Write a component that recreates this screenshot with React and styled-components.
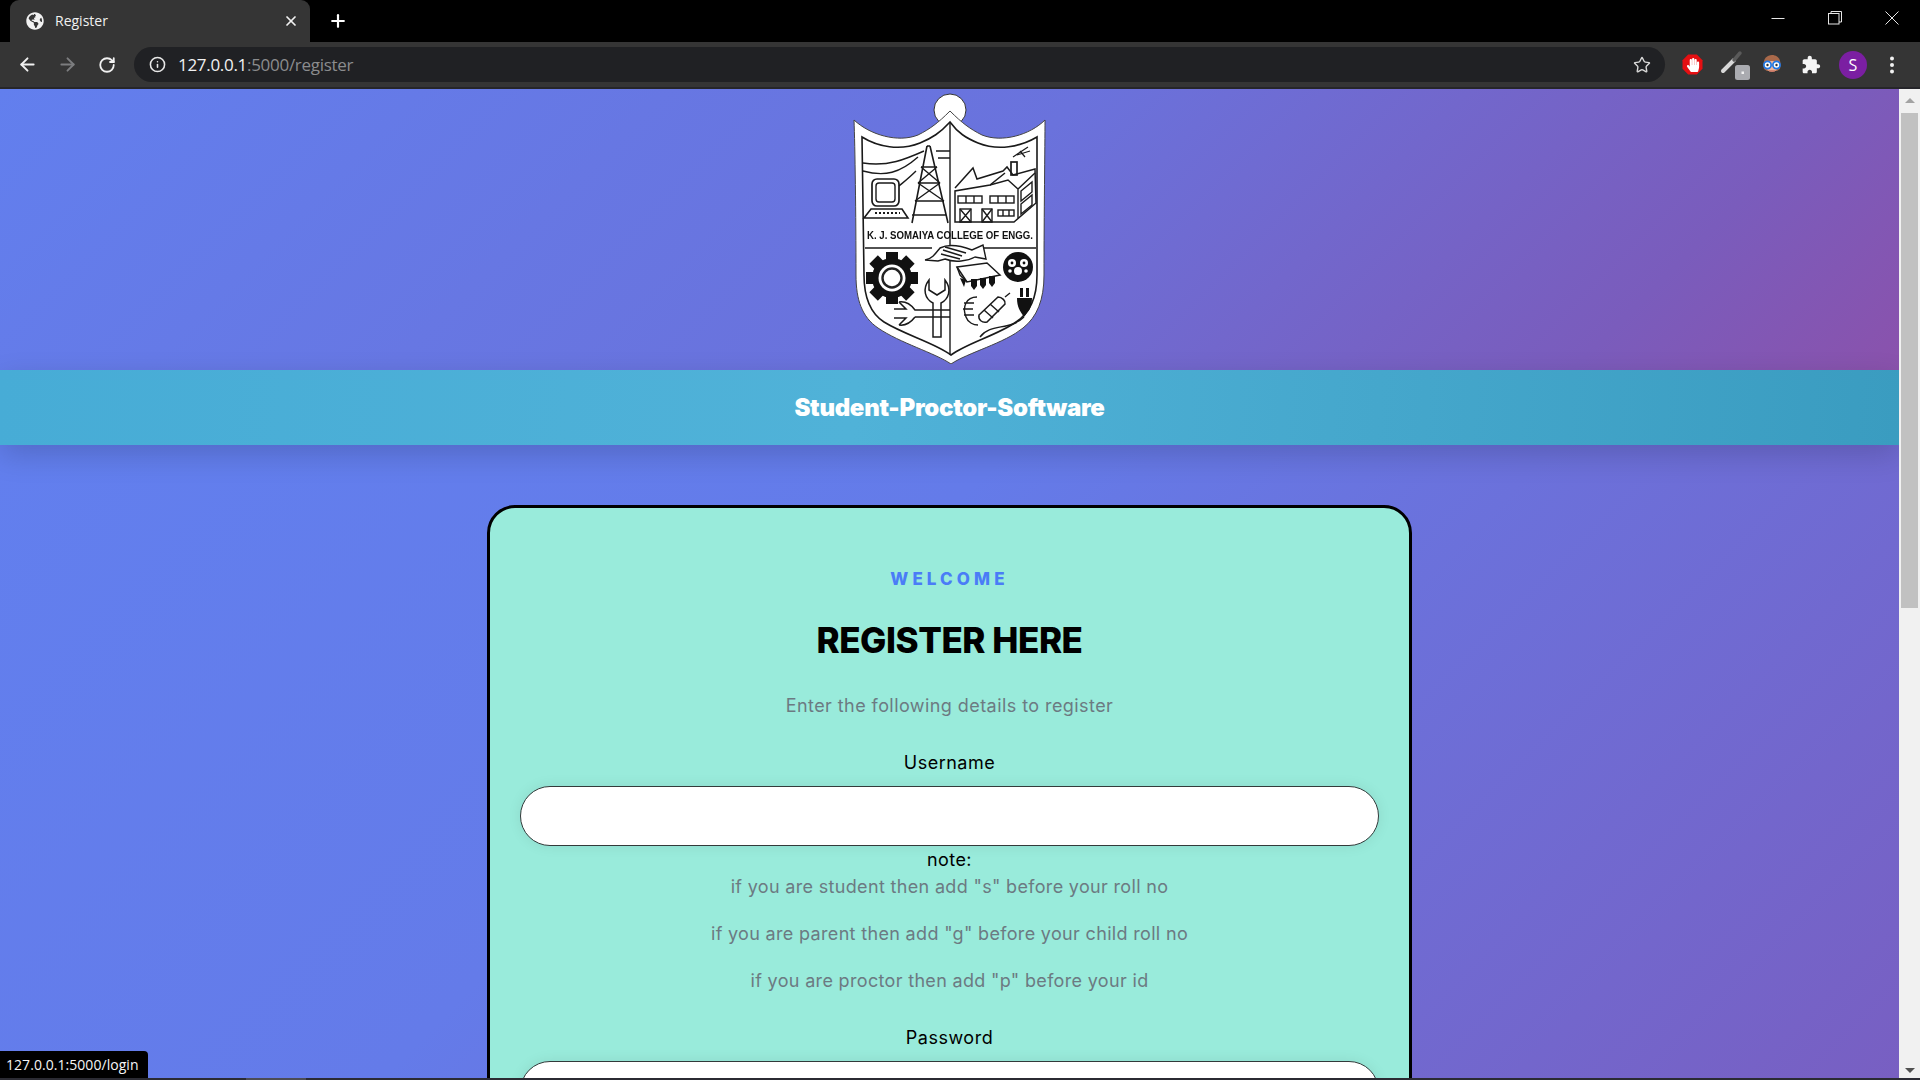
import React from "react";
import styled, { createGlobalStyle } from "styled-components";
import { ArrowLeft, ArrowRight, RotateCw, Info, Star, X, Plus } from "lucide-react";
import { FaGlobeAmericas, FaHandPaper } from "react-icons/fa";

const Global = createGlobalStyle`
  html, body { margin: 0; padding: 0; height: 100%; overflow: hidden; background: #000; }
  * { box-sizing: border-box; }
`;

const Shell = styled.div`
  position: relative;
  width: 1920px;
  height: 1080px;
  display: flex;
  flex-direction: column;
  overflow: hidden;
  font-family: "Inter", "Liberation Sans", sans-serif;
`;

const TabStrip = styled.div`
  height: 42px;
  background: #000;
  display: flex;
  align-items: flex-end;
  padding-left: 10px;
  color: #fff;
  flex: none;
`;

const Tab = styled.div`
  width: 300px;
  height: 42px;
  background: #353535;
  border-radius: 9px 9px 0 0;
  display: flex;
  align-items: center;
  padding: 0 11px 1px 16px;
  font: 400 14px "Open Sans", "Liberation Sans", sans-serif;
  color: #f1f1f1;
`;

const TabTitle = styled.span`
  margin-left: 11px;
  flex: 1;
`;

const NewTab = styled.div`
  width: 50px;
  height: 42px;
  margin-left: 3px;
  display: flex;
  align-items: center;
  justify-content: center;
`;

const WindowControls = styled.div`
  margin-left: auto;
  height: 42px;
  display: flex;
  align-items: flex-start;
`;

const WindowButton = styled.div`
  width: 57px;
  height: 36px;
  display: flex;
  align-items: center;
  justify-content: center;
`;

const Toolbar = styled.div`
  height: 47px;
  flex: none;
  background: #353535;
  border-bottom: 2px solid #26262a;
  display: flex;
  align-items: center;
  padding: 0 4px 0 7px;
  color: #f1f1f1;
`;

const ToolSlot = styled.div`
  width: ${(p) => p.$w || 40}px;
  height: 34px;
  flex: none;
  display: flex;
  align-items: center;
  justify-content: center;
  color: ${(p) => p.$color || "#f1f1f1"};
`;

const Omnibox = styled.div`
  flex: 1;
  height: 35px;
  margin: 0 7px;
  border-radius: 18px;
  background: #202124;
  display: flex;
  align-items: center;
  padding: 0 14px 0 15px;
  font: 400 17px "Open Sans", "Liberation Sans", sans-serif;
  letter-spacing: -0.3px;
`;

const UrlHost = styled.span`
  margin-left: 12px;
  color: #f1f1f1;
`;

const UrlPath = styled.span`
  color: #8b8c8e;
  flex: 1;
`;

const Viewport = styled.div`
  flex: 1;
  min-height: 0;
  display: flex;
`;

const Page = styled.div`
  flex: 1;
  min-width: 0;
  display: flex;
  flex-direction: column;
  overflow: hidden;
`;

const Header = styled.header`
  height: 281px;
  flex: none;
  background: linear-gradient(135deg, #627fee 0%, #6a72dc 50%, #7a5cbc 85%, #8a52ac 100%);
  display: flex;
  justify-content: center;
`;

const Banner = styled.div`
  height: 75px;
  flex: none;
  position: relative;
  z-index: 1;
  background: linear-gradient(95deg, #47acd6 0%, #50b2d8 45%, #3a9cc0 100%);
  box-shadow: 0 10px 30px rgba(0, 0, 0, 0.16);
  color: #fff;
  display: flex;
  align-items: center;
  justify-content: center;
  font: 900 24px "Inter", sans-serif;
  letter-spacing: -0.3px;
`;

const Main = styled.main`
  flex: 1;
  min-height: 0;
  background: linear-gradient(135deg, #627fee 0%, #647be9 40%, #785fc2 100%);
  padding-top: 60px;
  display: flex;
  justify-content: center;
  overflow: hidden;
`;

const Card = styled.section`
  width: 925px;
  height: 900px;
  flex: none;
  border: 3px solid #000;
  border-radius: 28px;
  background: #99ebdb;
  padding: 59px 30px 0;
  text-align: center;
`;

const Eyebrow = styled.div`
  font: 800 17px/24px "Inter", sans-serif;
  letter-spacing: 4.1px;
  color: #4a7cf7;
`;

const Title = styled.h1`
  margin: 24px 0 0;
  font: 800 35px/50px "Inter", sans-serif;
  letter-spacing: -0.45px;
  color: #000;
`;

const Subtitle = styled.p`
  margin: 27px 0 0;
  font: 400 18px/28px "Inter", sans-serif;
  letter-spacing: 0.43px;
  color: #6c7a82;
`;

const FieldLabel = styled.label`
  display: block;
  margin-top: ${(p) => p.$top}px;
  font: 400 18px/24px "Inter", sans-serif;
  letter-spacing: 0.5px;
  color: #000;
`;

const TextInput = styled.input`
  display: block;
  width: 100%;
  height: 60px;
  margin-top: 11px;
  border: 1px solid #333a3a;
  border-radius: 30px;
  background: #fff;
  box-shadow: 0 0 14px rgba(0, 0, 0, 0.08);
  outline: none;
`;

const NoteTitle = styled.div`
  margin: 2px 0 1px;
  font: 400 18px/24px "Inter", sans-serif;
  letter-spacing: 0.4px;
  color: #000;
`;

const NoteLine = styled.p`
  margin: 0 0 20px;
  font: 400 18px/27px "Inter", sans-serif;
  letter-spacing: 0.33px;
  color: #6c7a82;
`;

const Scrollbar = styled.div`
  width: 21px;
  flex: none;
  background: #f1f1f1;
  display: flex;
  flex-direction: column;
  align-items: center;
  padding-top: 9px;
`;

const ThumbTrack = styled.div`
  flex: 1;
  display: flex;
  flex-direction: column;
  width: 17px;
  padding-top: 10px;
`;

const Thumb = styled.div`
  width: 17px;
  height: 495px;
  background: #c1c1c1;
`;

const Arrow = styled.div`
  width: 0;
  height: 0;
  border-left: 5px solid transparent;
  border-right: 5px solid transparent;
  ${(p) => (p.$down ? "border-top: 5px solid #505050; margin-bottom: 5px;" : "border-bottom: 5px solid #a3a3a3;")}
`;

const BottomStrip = styled.div`
  height: 2px;
  flex: none;
  background: #2b2b33;
  display: flex;
  padding-left: 246px;
`;

const StripActive = styled.div`
  width: 60px;
  background: #4c4c55;
`;

const StatusBubble = styled.div`
  position: absolute;
  left: 0;
  bottom: 2px;
  width: 148px;
  height: 27px;
  background: #000;
  border-top-right-radius: 4px;
  color: #f5f5f5;
  font: 400 14px/27px "Open Sans", "Liberation Sans", sans-serif;
  letter-spacing: 0.05px;
  padding-left: 6px;
`;

const CrestSvg = styled.svg`
  width: 220px;
  height: 275px;
  flex: none;
  filter: blur(0.45px);
`;

const CrestText = styled.text`
  font: 700 10.5px "Liberation Sans", sans-serif;
  fill: #111;
`;

const Avatar = styled.div`
  width: 28px;
  height: 28px;
  border-radius: 50%;
  background: #7b1fa2;
  color: #fff;
  font: 400 16px/28px "Open Sans", sans-serif;
  text-align: center;
`;

function Gear() {
  const teeth = [0, 45, 90, 135, 180, 225, 270, 315];
  return (
    <g>
      {teeth.map((a) => (
        <rect key={a} x="46" y="167" width="12" height="10" fill="#111" transform={`rotate(${a} 52 193)`} />
      ))}
      <circle cx="52" cy="193" r="20" fill="#111" />
      <circle cx="52" cy="193" r="13.5" fill="#fff" />
      <circle cx="52" cy="193" r="9.5" fill="#fff" stroke="#222" strokeWidth="2.4" />
    </g>
  );
}

function Crest() {
  return (
    <CrestSvg viewBox="0 4 220 275" aria-label="K. J. Somaiya College of Engg. crest">
      <circle cx="110" cy="25" r="16" fill="#fff" stroke="#333" strokeWidth="1" />
      <path
        d="M110 26C98 38 90 44 78 50C58 58 30 50 14 35C15 60 16 130 16 190C16 215 22 232 38 243C60 258 95 268 111 279C127 268 165 258 183 243C197 232 204 215 204 190C204 130 205 60 205 35C190 50 162 58 142 50C130 44 122 38 110 26Z"
        fill="#fff"
        stroke="#444"
        strokeWidth="1"
      />
      <path
        d="M110 37C100 48 92 53 80 58C60 66 38 62 22 52L24 190C24 212 30 228 44 237C65 250 95 258 111 270C127 258 158 250 176 237C190 228 197 212 197 190L197 52C180 62 158 66 138 58C126 53 118 48 110 37Z"
        fill="#fff"
        stroke="#1a1a1a"
        strokeWidth="1.6"
      />
      <g fill="none" stroke="#1a1a1a" strokeWidth="1.4">
        <path d="M110 37V270" strokeWidth="1.4" />
        <path d="M25 163H92M138 163H196" strokeWidth="1.4" />
        {/* wires and tower */}
        <path d="M23 78C48 82 66 74 84 66M23 86C45 92 60 88 78 72M96 66H110M98 73H110" />
        <path d="M87 61L72 138M90 61L108 138M87 61H90M81 82H97M78 98H100M75 116H104M72 130H106" strokeWidth="1.6" />
        <path d="M81 82L100 98M97 82L78 98M78 98L104 116M100 98L75 116" />
        {/* computer and keyboard */}
        <rect x="32" y="94" width="27" height="27" rx="5" strokeWidth="1.7" />
        <rect x="36" y="98" width="19" height="19" rx="3" />
        <path d="M59 101C65 96 70 92 76 86" />
        <path d="M24 133L31 124H62L68 133Z" strokeWidth="1.6" />
        <path d="M35 128H60" strokeDasharray="2 2" strokeWidth="2" />
        {/* building */}
        <path d="M115 103L133 83L137 94L163 86L167 82L173 90L195 84L196 118L174 137H115V106L150 100L165 88" strokeWidth="1.5" />
        <path d="M150 100L168 95L178 104L195 88M178 104V133" />
        <rect x="118" y="111" width="24" height="7" />
        <path d="M126 111V118M134 111V118" />
        <rect x="150" y="111" width="24" height="7" />
        <path d="M158 111V118M166 111V118" />
        <rect x="120" y="124" width="11" height="13" />
        <path d="M120 124L131 137M131 124L120 137" />
        <rect x="142" y="124" width="10" height="13" />
        <path d="M142 124L152 137M152 124L142 137" />
        <rect x="158" y="125" width="16" height="6" />
        <path d="M163 125V131M169 125V131" />
        <path d="M181 106L192 97V107L181 116ZM181 119L192 110V120L181 129Z" />
        <rect x="171" y="77" width="6" height="13" strokeWidth="1.7" />
        <path d="M173 72L188 62M177 70L190 66M180 66L185 72" strokeWidth="1.2" />
        {/* handshake */}
        <path d="M85 175C92 174 96 168 100 163C110 158 124 162 132 165L143 160L146 174L135 172C128 176 115 178 105 174L98 176Z" fill="#fff" strokeWidth="1.4" />
        <path d="M103 165L122 171M101 169L120 174M105 162L126 168" />
        {/* spanners */}
        <path d="M89 195C82 204 85 214 93 218V252H101V218C109 214 112 204 105 195V205L97 210L89 205Z" fill="#fff" strokeWidth="1.5" />
        <path d="M59 217C66 216 72 221 75 225H110M75 232H110M59 240C66 241 72 236 75 232M59 217L66 224H54M59 240L66 233H54" strokeWidth="1.5" />
        {/* chip */}
        <path d="M117 182L147 178L160 190L127 197Z" fill="#fff" strokeWidth="1.5" />
        <path d="M117 182L120 190L127 197" />
        {/* coil, component and wire */}
        <path d="M137 212C126 212 122 222 126 232C128 238 134 240 138 240M124 218H134M123 224H133M124 230H134" />
        <path d="M139 230L158 212C162 212 166 216 165 219L147 237C142 238 138 235 139 230Z" strokeWidth="1.5" />
        <path d="M144 225L153 233M150 219L159 227M165 212L170 208" />
        <path d="M140 252C150 238 170 246 184 232" />
      </g>
      <CrestText x="27" y="154" textLength="166" lengthAdjust="spacingAndGlyphs">K. J. SOMAIYA COLLEGE OF ENGG.</CrestText>
      <Gear />
      <g fill="#111">
        <path d="M131 194H137V201L134 205L131 201ZM140 193H146V200L143 204L140 200ZM149 191H155V198L152 202L149 198Z" />
        <path d="M120 193L126 195L124 202Z" />
        <circle cx="178" cy="182" r="15" />
        <path d="M177 213H192C192 224 188 226 184 232C180 226 177 222 177 213Z" />
        <path d="M180 203H183V212H180ZM186 203H189V212H186Z" />
      </g>
      <g fill="#fff">
        <circle cx="172" cy="178" r="4" />
        <circle cx="184" cy="178" r="4" />
        <circle cx="178" cy="186" r="4" />
        <circle cx="170" cy="186" r="1.8" />
        <circle cx="186" cy="186" r="1.8" />
      </g>
      <g fill="#111">
        <circle cx="172" cy="178" r="1.4" />
        <circle cx="184" cy="178" r="1.4" />
      </g>
    </CrestSvg>
  );
}

function Dropper() {
  return (
    <svg width="34" height="34" viewBox="0 0 34 34">
      <path d="M4 23L15 12" stroke="#d8d8d8" strokeWidth="4" strokeLinecap="round" />
      <path d="M15 12L21 5" stroke="#5a5a5a" strokeWidth="3.5" strokeLinecap="round" />
      <rect x="16" y="17" width="15" height="15" rx="2.5" fill="#aaabb0" />
      <rect x="22.5" y="23.5" width="2.5" height="2.5" fill="#f1f1f1" />
    </svg>
  );
}

function Face() {
  return (
    <svg width="20" height="22" viewBox="0 0 20 22">
      <path d="M2 15C0 6 4 1 10 1C16 1 20 6 18 15L15 17H5Z" fill="#a9694a" />
      <path d="M3 11C5 20 15 20 17 11L15 7H5Z" fill="#eeb59a" />
      <circle cx="5.5" cy="11" r="3.6" fill="#fff" stroke="#1e78e6" strokeWidth="1.7" />
      <circle cx="14.5" cy="11" r="3.6" fill="#fff" stroke="#1e78e6" strokeWidth="1.7" />
      <circle cx="5.5" cy="11" r="1.2" fill="#333" />
      <circle cx="14.5" cy="11" r="1.2" fill="#333" />
      <path d="M7 17H13" stroke="#c9705f" strokeWidth="1.4" />
    </svg>
  );
}

function AdBlock() {
  return (
    <svg width="21" height="21" viewBox="0 0 21 21">
      <path d="M6.2 0.5H14.8L20.5 6.2V14.8L14.8 20.5H6.2L0.5 14.8V6.2Z" fill="#e60f12" />
      <foreignObject x="3.5" y="2.5" width="14" height="16">
        <FaHandPaper size={14} color="#fff" style={{ display: "block", margin: "1px 0 0" }} />
      </foreignObject>
    </svg>
  );
}

function Extension() {
  return (
    <svg width="20" height="20" viewBox="0 0 24 24" fill="#f5f5f5">
      <path d="M20.5 11H19V7c0-1.1-.9-2-2-2h-4V3.5C13 2.12 11.88 1 10.5 1S8 2.12 8 3.5V5H4c-1.1 0-1.99.9-1.99 2v3.8H3.5c1.49 0 2.7 1.21 2.7 2.7s-1.21 2.7-2.7 2.7H2V20c0 1.1.9 2 2 2h3.8v-1.5c0-1.49 1.21-2.7 2.7-2.7 1.49 0 2.7 1.21 2.7 2.7V22H17c1.1 0 2-.9 2-2v-4h1.5c1.38 0 2.5-1.12 2.5-2.5S21.88 11 20.5 11z" />
    </svg>
  );
}

function Minimize() {
  return (
    <svg width="14" height="14" viewBox="0 0 14 14">
      <path d="M0.5 7.5H13.5" stroke="#e6e6e6" />
    </svg>
  );
}

function Restore() {
  return (
    <svg width="14" height="14" viewBox="0 0 14 14" fill="none" stroke="#e6e6e6">
      <rect x="0.5" y="2.5" width="10.5" height="10.5" />
      <path d="M3 2.5V0.5H13.5V11H11" />
    </svg>
  );
}

function CloseWindow() {
  return (
    <svg width="14" height="14" viewBox="0 0 14 14" stroke="#e6e6e6">
      <path d="M0.5 0.5L13.5 13.5M13.5 0.5L0.5 13.5" />
    </svg>
  );
}

export default function App() {
  return (
    <Shell>
      <Global />
      <TabStrip>
        <Tab>
          <FaGlobeAmericas size={18} color="#f1f1f1" />
          <TabTitle>Register</TabTitle>
          <X size={16} strokeWidth={2.6} color="#f1f1f1" />
        </Tab>
        <NewTab>
          <Plus size={20} strokeWidth={2.6} color="#fff" />
        </NewTab>
        <WindowControls>
          <WindowButton><Minimize /></WindowButton>
          <WindowButton><Restore /></WindowButton>
          <WindowButton><CloseWindow /></WindowButton>
        </WindowControls>
      </TabStrip>
      <Toolbar>
        <ToolSlot><ArrowLeft size={21} strokeWidth={2.2} /></ToolSlot>
        <ToolSlot $color="#7c7d7f"><ArrowRight size={21} strokeWidth={2.2} /></ToolSlot>
        <ToolSlot><RotateCw size={18} strokeWidth={2.4} /></ToolSlot>
        <Omnibox>
          <Info size={17} strokeWidth={2.2} color="#e8e8e8" />
          <UrlHost>127.0.0.1</UrlHost>
          <UrlPath>:5000/register</UrlPath>
          <Star size={18} strokeWidth={1.9} color="#d8d8d8" />
        </Omnibox>
        <ToolSlot><AdBlock /></ToolSlot>
        <ToolSlot $w={48}><Dropper /></ToolSlot>
        <ToolSlot $w={24}><Face /></ToolSlot>
        <ToolSlot $w={54}><Extension /></ToolSlot>
        <ToolSlot $w={30}><Avatar>S</Avatar></ToolSlot>
        <ToolSlot $w={48}>
          <svg width="6" height="18" viewBox="0 0 6 18" fill="#f1f1f1">
            <circle cx="3" cy="2.5" r="2" />
            <circle cx="3" cy="9" r="2" />
            <circle cx="3" cy="15.5" r="2" />
          </svg>
        </ToolSlot>
      </Toolbar>
      <Viewport>
        <Page>
          <Header><Crest /></Header>
          <Banner>Student-Proctor-Software</Banner>
          <Main>
            <Card>
              <Eyebrow>WELCOME</Eyebrow>
              <Title>REGISTER HERE</Title>
              <Subtitle>Enter the following details to register</Subtitle>
              <FieldLabel $top={31}>Username</FieldLabel>
              <TextInput type="text" />
              <NoteTitle>note:</NoteTitle>
              <NoteLine>if you are student then add "s" before your roll no</NoteLine>
              <NoteLine>if you are parent then add "g" before your child roll no</NoteLine>
              <NoteLine>if you are proctor then add "p" before your id</NoteLine>
              <FieldLabel $top={32}>Password</FieldLabel>
              <TextInput type="password" />
            </Card>
          </Main>
        </Page>
        <Scrollbar>
          <Arrow />
          <ThumbTrack><Thumb /></ThumbTrack>
          <Arrow $down />
        </Scrollbar>
      </Viewport>
      <BottomStrip><StripActive /></BottomStrip>
      <StatusBubble>127.0.0.1:5000/login</StatusBubble>
    </Shell>
  );
}
